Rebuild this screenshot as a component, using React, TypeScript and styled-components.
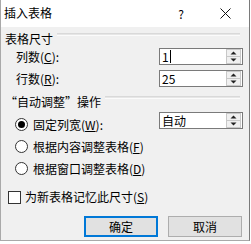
import styled, { createGlobalStyle } from 'styled-components';

const GlobalStyle = createGlobalStyle`
  html, body {
    margin: 0;
    padding: 0;
    background: #ffffff;
  }
  body {
    font-family: "Noto Sans CJK SC", "Liberation Sans", sans-serif;
    font-size: 12px;
    color: #000;
  }
`;

const Dialog = styled.div`
  width: 250px;
  height: 241px;
  box-sizing: border-box;
  background: #f0f0f0;
  border-left: 1px solid #a9a9a9;
  border-right: 1px solid #7a7a7a;
  border-bottom: 1px solid #a9a9a9;
  display: flex;
  flex-direction: column;
`;

const TitleBar = styled.div`
  height: 27px;
  background: #ffffff;
  display: flex;
  align-items: center;
  padding-left: 3px;
  line-height: 14px;
`;

const Title = styled.span`
  flex: 1;
  margin-top: -2px;
`;

const TitleButton = styled.span<{ $w: number }>`
  width: ${({ $w }) => $w}px;
  display: flex;
  justify-content: center;
  align-items: center;
`;

const Body = styled.div`
  flex: 1;
  padding: 5px 6px 0 4px;
  display: flex;
  flex-direction: column;
`;

const GroupHead = styled.div<{ $top: number }>`
  display: flex;
  align-items: flex-start;
  line-height: 14px;
  height: 14px;
  margin-top: ${({ $top }) => $top}px;
`;

const GroupLine = styled.div`
  flex: 1;
  margin: 1px 3px 0 4px;
  height: 1px;
  border-top: 1px solid #d9d9d9;
  border-bottom: 1px solid #fbfbfb;
  background: #e6e6e6;
`;

const FieldRow = styled.div<{ $top: number }>`
  display: flex;
  align-items: center;
  justify-content: space-between;
  height: 17px;
  margin-top: ${({ $top }) => $top}px;
  padding-left: 11px;
`;

const OptionRow = styled.div<{ $top?: number }>`
  display: flex;
  align-items: flex-start;
  justify-content: space-between;
  height: 22px;
  margin-top: ${({ $top }) => $top ?? 0}px;
  padding-left: 10px;
`;

const OptionLabel = styled.label`
  display: flex;
  align-items: center;
  gap: 5px;
  height: 17px;
  margin-top: 4px;
  line-height: 14px;
`;

const Radio = styled.span<{ $on?: boolean }>`
  width: 11px;
  height: 11px;
  border-radius: 50%;
  border: 1px solid #333;
  background: #fff;
  display: flex;
  align-items: center;
  justify-content: center;
  &::after {
    content: '';
    width: 7px;
    height: 7px;
    border-radius: 50%;
    background: ${({ $on }) => ($on ? '#000' : 'transparent')};
  }
`;

const Check = styled.span`
  width: 11px;
  height: 11px;
  border: 1px solid #333;
  background: #fff;
`;

const Key = styled.span`
  text-decoration: underline;
  text-underline-offset: 1px;
`;

const SpinBox = styled.div`
  width: 84px;
  height: 17px;
  box-sizing: border-box;
  border: 1px solid #7a7a7a;
  background: #fff;
  display: flex;
  align-items: center;
  justify-content: space-between;
`;

const SpinValue = styled.span`
  padding-left: 2px;
  line-height: 14px;
  display: flex;
  align-items: center;
`;

const Caret = styled.span`
  width: 1px;
  height: 13px;
  background: #000;
  margin-left: 1px;
`;

const SpinArrows = styled.svg`
  display: block;
  margin-right: 1px;
`;

const CheckRow = styled.label`
  display: flex;
  align-items: center;
  gap: 4px;
  height: 22px;
  margin-top: 8px;
  padding-left: 3px;
  line-height: 14px;
`;

const ButtonBar = styled.div`
  display: flex;
  justify-content: flex-end;
  gap: 10px;
  margin-top: 8px;
  padding-right: 1px;
`;

const DlgButton = styled.button<{ $primary?: boolean }>`
  width: 74px;
  height: 21px;
  box-sizing: border-box;
  padding: 0;
  font: inherit;
  line-height: 14px;
  background: #e1e1e1;
  border: ${({ $primary }) => ($primary ? '2px solid #0078d7' : '1px solid #adadad')};
  color: #000;
`;

function Spinner() {
  return (
    <SpinArrows width="15" height="15" viewBox="0 0 15 15">
      <rect x="0.5" y="0.5" width="14" height="14" fill="#f0f0f0" stroke="#c8c8c8" />
      <line x1="1" y1="7.5" x2="14" y2="7.5" stroke="#c8c8c8" />
      <path d="M7.5 2.5 L10.5 5.5 L4.5 5.5 Z" fill="#222" />
      <path d="M4.5 9.5 L10.5 9.5 L7.5 12.5 Z" fill="#222" />
    </SpinArrows>
  );
}

export default function App() {
  return (
    <>
      <GlobalStyle />
      <Dialog>
        <TitleBar>
          <Title>插入表格</Title>
          <TitleButton $w={40}>?</TitleButton>
          <TitleButton $w={48}>
            <svg width="11" height="11" viewBox="0 0 11 11">
              <path d="M0.5 0.5 L10.5 10.5 M10.5 0.5 L0.5 10.5" stroke="#111" strokeWidth="1" />
            </svg>
          </TitleButton>
        </TitleBar>
        <Body>
          <GroupHead $top={0}>
            表格尺寸
            <GroupLine />
          </GroupHead>
          <FieldRow $top={2}>
            <span>
              列数(<Key>C</Key>):
            </span>
            <SpinBox>
              <SpinValue>
                1<Caret />
              </SpinValue>
              <Spinner />
            </SpinBox>
          </FieldRow>
          <FieldRow $top={5}>
            <span>
              行数(<Key>R</Key>):
            </span>
            <SpinBox>
              <SpinValue>25</SpinValue>
              <Spinner />
            </SpinBox>
          </FieldRow>
          <GroupHead $top={8}>
            “自动调整”操作
            <GroupLine />
          </GroupHead>
          <OptionRow $top={3}>
            <OptionLabel>
              <Radio $on />
              <span>
                固定列宽(<Key>W</Key>):
              </span>
            </OptionLabel>
            <SpinBox>
              <SpinValue>自动</SpinValue>
              <Spinner />
            </SpinBox>
          </OptionRow>
          <OptionRow>
            <OptionLabel>
              <Radio />
              <span>
                根据内容调整表格(<Key>F</Key>)
              </span>
            </OptionLabel>
          </OptionRow>
          <OptionRow>
            <OptionLabel>
              <Radio />
              <span>
                根据窗口调整表格(<Key>D</Key>)
              </span>
            </OptionLabel>
          </OptionRow>
          <CheckRow>
            <Check />
            <span>
              为新表格记忆此尺寸(<Key>S</Key>)
            </span>
          </CheckRow>
          <ButtonBar>
            <DlgButton $primary>确定</DlgButton>
            <DlgButton>取消</DlgButton>
          </ButtonBar>
        </Body>
      </Dialog>
    </>
  );
}
